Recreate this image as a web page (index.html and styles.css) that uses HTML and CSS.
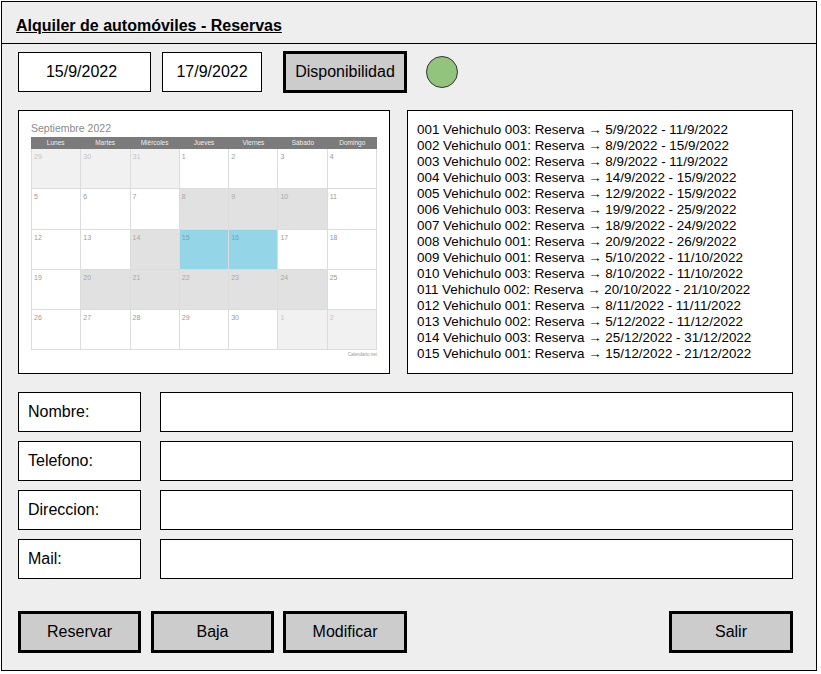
FILE: index.html
```html
<!DOCTYPE html>
<html lang="es">
<head>
<meta charset="utf-8">
<title>Alquiler de automóviles - Reservas</title>
<link rel="stylesheet" href="styles.css">
</head>
<body>
<div class="app">
  <header class="header"><h1 class="title">Alquiler de automóviles - Reservas</h1></header>
  <main class="content">
    <div class="toolbar">
      <div class="date-box date-from">15/9/2022</div>
      <div class="date-box date-to">17/9/2022</div>
      <button class="btn btn-disp">Disponibilidad</button>
      <span class="status-dot"></span>
    </div>

    <div class="panels">
      <section class="panel calendar-panel">
        <div class="cal-title">Septiembre 2022</div>
        <div class="cal-head">
          <span>Lunes</span><span>Martes</span><span>Miércoles</span><span>Jueves</span><span>Viernes</span><span>Sábado</span><span>Domingo</span>
        </div>
        <div class="cal-grid">
          <div class="cell out">29</div><div class="cell out">30</div><div class="cell out">31</div><div class="cell">1</div><div class="cell">2</div><div class="cell">3</div><div class="cell">4</div>
          <div class="cell">5</div><div class="cell">6</div><div class="cell">7</div><div class="cell busy">8</div><div class="cell busy">9</div><div class="cell busy">10</div><div class="cell">11</div>
          <div class="cell">12</div><div class="cell">13</div><div class="cell busy">14</div><div class="cell sel">15</div><div class="cell sel">16</div><div class="cell">17</div><div class="cell">18</div>
          <div class="cell">19</div><div class="cell busy">20</div><div class="cell busy">21</div><div class="cell busy">22</div><div class="cell busy">23</div><div class="cell busy">24</div><div class="cell">25</div>
          <div class="cell">26</div><div class="cell">27</div><div class="cell">28</div><div class="cell">29</div><div class="cell">30</div><div class="cell out">1</div><div class="cell out">2</div>
        </div>
        <div class="cal-credit">Calendario.net</div>
      </section>

      <section class="panel list-panel">
        <ul class="res-list">
          <li>001 Vehichulo 003: Reserva → 5/9/2022 - 11/9/2022</li>
          <li>002 Vehichulo 001: Reserva → 8/9/2022 - 15/9/2022</li>
          <li>003 Vehichulo 002: Reserva → 8/9/2022 - 11/9/2022</li>
          <li>004 Vehichulo 003: Reserva → 14/9/2022 - 15/9/2022</li>
          <li>005 Vehichulo 002: Reserva → 12/9/2022 - 15/9/2022</li>
          <li>006 Vehichulo 003: Reserva → 19/9/2022 - 25/9/2022</li>
          <li>007 Vehichulo 002: Reserva → 18/9/2022 - 24/9/2022</li>
          <li>008 Vehichulo 001: Reserva → 20/9/2022 - 26/9/2022</li>
          <li>009 Vehichulo 001: Reserva → 5/10/2022 - 11/10/2022</li>
          <li>010 Vehichulo 003: Reserva → 8/10/2022 - 11/10/2022</li>
          <li>011 Vehichulo 002: Reserva → 20/10/2022 - 21/10/2022</li>
          <li>012 Vehichulo 001: Reserva → 8/11/2022 - 11/11/2022</li>
          <li>013 Vehichulo 002: Reserva → 5/12/2022 - 11/12/2022</li>
          <li>014 Vehichulo 003: Reserva → 25/12/2022 - 31/12/2022</li>
          <li>015 Vehichulo 001: Reserva → 15/12/2022 - 21/12/2022</li>
        </ul>
      </section>
    </div>

    <form class="form">
      <div class="form-row"><label class="label">Nombre:</label><div class="field"></div></div>
      <div class="form-row"><label class="label">Telefono:</label><div class="field"></div></div>
      <div class="form-row"><label class="label">Direccion:</label><div class="field"></div></div>
      <div class="form-row"><label class="label">Mail:</label><div class="field"></div></div>
    </form>

    <div class="actions">
      <button class="btn btn-a">Reservar</button>
      <button class="btn btn-a">Baja</button>
      <button class="btn btn-b">Modificar</button>
      <span class="spacer"></span>
      <button class="btn btn-b">Salir</button>
    </div>
  </main>
</div>
</body>
</html>
```

FILE: styles.css
```css
* { box-sizing: border-box; }

body {
  margin: 0;
  background: #ffffff;
  font-family: "Liberation Sans", Arial, sans-serif;
  color: #000;
}

.app {
  margin: 1px 0 0 1px;
  width: 816px;
  height: 670px;
  border: 1px solid #000;
  background: #eeeeee;
}

.header {
  height: 42px;
  border-bottom: 1px solid #000;
  padding: 14px 0 0 14px;
}

.title {
  margin: 0;
  font-size: 16px;
  line-height: 19px;
  font-weight: bold;
  text-decoration: underline;
}

.content {
  padding: 7px 23px 0 16px;
}

.toolbar {
  display: flex;
  align-items: center;
  height: 42px;
}

.date-box {
  height: 40px;
  border: 1px solid #000;
  background: #fff;
  display: flex;
  align-items: center;
  justify-content: center;
  font-size: 16px;
}

.date-from { width: 133px; padding-right: 6px; }
.date-to { width: 100px; margin-left: 11px; }

.btn {
  height: 42px;
  border: 3px solid #000;
  background: #cccccc;
  font-family: "Liberation Sans", Arial, sans-serif;
  font-size: 16px;
  color: #000;
  padding: 0;
}

.btn-disp { width: 124px; margin-left: 21px; }

.status-dot {
  width: 32px;
  height: 32px;
  margin-left: 19px;
  border-radius: 50%;
  background: #93c47d;
  border: 1px solid #333;
}

.panels {
  display: flex;
  margin-top: 17px;
  height: 264px;
  gap: 17px;
}

.panel {
  border: 1px solid #000;
  background: #fff;
}

.calendar-panel {
  width: 372px;
  padding: 11px 0 0 12px;
}

.cal-title {
  font-size: 10.5px;
  line-height: 13px;
  color: #8a8a8a;
  height: 15px;
}

.cal-head {
  width: 346px;
  height: 12px;
  background: #7b7b7b;
  display: grid;
  grid-template-columns: repeat(7, 1fr);
  font-size: 6.5px;
  line-height: 12px;
  color: #eee;
  text-align: center;
}

.cal-grid {
  width: 346px;
  display: grid;
  grid-template-columns: repeat(7, 1fr);
  grid-auto-rows: 40.3px;
  border-left: 1px solid #dcdcdc;
}

.cell {
  border-right: 1px solid #dcdcdc;
  border-bottom: 1px solid #dcdcdc;
  background: #fff;
  font-size: 7px;
  line-height: 9px;
  padding: 3px 0 0 2px;
  color: #9a9a9a;
}

.cell.out { background: #f1f1f1; color: #c4c4c4; }
.cell.busy { background: #e1e1e1; color: #a8a8a8; }
.cell.sel { background: #94d5e8; color: #6fa8b8; }

.cal-credit {
  width: 346px;
  text-align: right;
  font-size: 4.5px;
  line-height: 8px;
  margin-top: 1px;
  color: #999;
}

.list-panel {
  width: 386px;
  padding: 11px 0 0 9px;
}

.res-list {
  list-style: none;
  margin: 0;
  padding: 0;
  font-size: 13.4px;
  line-height: 16px;
  white-space: nowrap;
}

.form {
  margin: 18px 0 0;
  display: flex;
  flex-direction: column;
  gap: 9px;
}

.form-row {
  display: flex;
  gap: 19px;
  height: 40px;
}

.label {
  width: 123px;
  border: 1px solid #000;
  background: #fff;
  display: flex;
  align-items: center;
  padding-left: 9px;
  font-size: 16px;
}

.field {
  flex: 1;
  border: 1px solid #000;
  background: #fff;
}

.actions {
  display: flex;
  margin-top: 32px;
}

.btn-a { width: 123px; margin-right: 10px; }
.btn-b { width: 124px; }
.actions .btn-a + .btn-a { margin-right: 9px; }

.spacer { flex: 1; }
```
